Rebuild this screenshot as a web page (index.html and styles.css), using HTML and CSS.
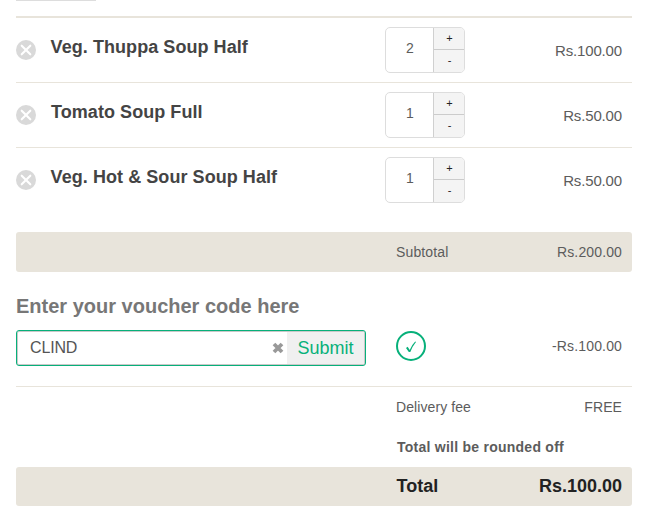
FILE: index.html
```
<!DOCTYPE html>
<html lang="en">
<head>
<meta charset="utf-8">
<title>Your order</title>
<link rel="stylesheet" href="styles.css">
</head>
<body>
<main class="cart">
  <div class="stub"></div>
  <section class="items">
    <div class="item">
      <svg class="remove" viewBox="0 0 20 20"><circle cx="10" cy="10" r="10"/><path d="M5.7 5.7l8.6 8.6M14.3 5.7l-8.6 8.6"/></svg>
      <h3 class="name n1">Veg. Thuppa Soup Half</h3>
      <div class="stepper"><span class="qty">2</span><div class="btns"><span class="plus">+</span><span class="minus">-</span></div></div>
      <span class="price">Rs.100.00</span>
    </div>
    <div class="item">
      <svg class="remove" viewBox="0 0 20 20"><circle cx="10" cy="10" r="10"/><path d="M5.7 5.7l8.6 8.6M14.3 5.7l-8.6 8.6"/></svg>
      <h3 class="name n2">Tomato Soup Full</h3>
      <div class="stepper"><span class="qty">1</span><div class="btns"><span class="plus">+</span><span class="minus">-</span></div></div>
      <span class="price">Rs.50.00</span>
    </div>
    <div class="item">
      <svg class="remove" viewBox="0 0 20 20"><circle cx="10" cy="10" r="10"/><path d="M5.7 5.7l8.6 8.6M14.3 5.7l-8.6 8.6"/></svg>
      <h3 class="name n3">Veg. Hot &amp; Sour Soup Half</h3>
      <div class="stepper"><span class="qty">1</span><div class="btns"><span class="plus">+</span><span class="minus">-</span></div></div>
      <span class="price">Rs.50.00</span>
    </div>
  </section>
  <div class="line bar subtotal"><span>Subtotal</span><span class="amount">Rs.200.00</span></div>
  <h2 class="voucher-title">Enter your voucher code here</h2>
  <div class="voucher">
    <div class="field">
      <span class="code">CLIND</span>
      <svg class="clear" viewBox="0 0 12 12"><path d="M2 2l8 8M10 2l-8 8"/></svg>
      <span class="submit">Submit</span>
    </div>
    <svg class="ok" viewBox="0 0 30 30"><circle cx="15" cy="15" r="14"/><path class="tick" d="M10 17l1.700-1.200 2 3.200Q15.500 14 19.200 10.400L20 11Q16.300 15.500 14.300 21H12.800Z"/></svg>
    <span class="amount">-Rs.100.00</span>
  </div>
  <div class="line delivery"><span>Delivery fee</span><span class="amount">FREE</span></div>
  <div class="line note"><span>Total will be rounded off</span></div>
  <div class="line bar total"><span>Total</span><span class="amount">Rs.100.00</span></div>
</main>
</body>
</html>
```
FILE: styles.css
```
* { box-sizing: border-box; }
body {
  margin: 0;
  height: 517px;
  overflow: hidden;
  background: #fff;
  color: #5c5c5c;
  font-family: "Liberation Sans", Arial, sans-serif;
  font-size: 14px;
}
.cart { width: 616px; margin-left: 16px; }
.stub { width: 80px; height: 1px; background: #ddd; }
.items { margin-top: 15px; border-top: 2px solid #e8e4db; }
.item {
  display: grid;
  grid-template-columns: 34px 335px 80px 1fr;
  align-items: start;
  height: 65px;
  padding: 9px 10px 0 0;
  border-bottom: 1px solid #e8e4db;
}
.item:last-child { border-bottom: 0; }
.remove { width: 20px; height: 20px; margin-top: 13px; }
.remove circle { fill: #d9d9d9; }
.remove path { stroke: #fff; stroke-width: 2.1; stroke-linecap: round; }
.name {
  margin: 9px 0 0;
  font-size: 18px;
  line-height: 22px;
  color: #444;
  white-space: nowrap;
  padding-left: .6px;
  letter-spacing: .06px;
}
.n2 { padding-left: 1px; }
.stepper {
  display: flex;
  width: 80px;
  height: 46px;
  border: 1px solid #ddd;
  border-radius: 5px;
  overflow: hidden;
}
.qty { width: 47px; text-align: center; line-height: 41px; padding-left: 1px; }
.btns {
  flex: 1;
  border-left: 1px solid #d0d0d0;
  background: #f4f4f4;
  color: #222;
  font-size: 11px;
  text-align: center;
}
.plus, .minus { display: block; height: 22px; line-height: 20px; padding-left: 1px; }
.plus { border-bottom: 1px solid #ccc; }
.price { margin-top: 14px; font-size: 15px; line-height: 19px; text-align: right; letter-spacing: -.15px; }
.line { display: grid; grid-template-columns: 1fr auto; padding: 0 10px 0 380px; white-space: nowrap; }
.bar { background: #e8e4db; border-radius: 3px; }
.subtotal { height: 40px; line-height: 40px; margin-top: 19px; letter-spacing: .13px; }
.voucher-title { margin: 22px 0 0; font-size: 20px; line-height: 24px; color: #777; white-space: nowrap; }
.voucher {
  display: flex;
  align-items: flex-start;
  height: 69px;
  padding: 12px 10px 0 0;
  border-bottom: 1px solid #e8e4db;
}
.field {
  display: flex;
  align-items: center;
  width: 350px;
  height: 36px;
  border: 1px solid #07b07a;
  border-radius: 3px;
  box-shadow: inset 0 0 0 1px #c9c9c9;
  padding: 1px;
}
.code { flex: 1; padding-left: 12px; font-size: 16px; letter-spacing: -.15px; color: #555; }
.clear { width: 12px; height: 12px; margin-right: 3px; }
.clear path { stroke: #999; stroke-width: 3.8; }
.submit { width: 77px; height: 32px; background: #f0f0f0; color: #07b07a; font-size: 18px; line-height: 32px; text-align: center; }
.ok { width: 30px; height: 30px; margin: 1px 0 0 30px; }
.ok circle { fill: none; stroke: #07b07a; stroke-width: 2; }
.tick { fill: #07b07a; }
.voucher .amount { margin-left: auto; line-height: 32px; letter-spacing: .15px; }
.delivery { height: 40px; line-height: 41px; letter-spacing: .08px; }
.note { height: 40px; line-height: 41px; font-weight: bold; padding-left: 381px; letter-spacing: .25px; }
.total { height: 39px; line-height: 38px; font-size: 18px; font-weight: bold; color: #222; padding-left: 380.6px; }
```
